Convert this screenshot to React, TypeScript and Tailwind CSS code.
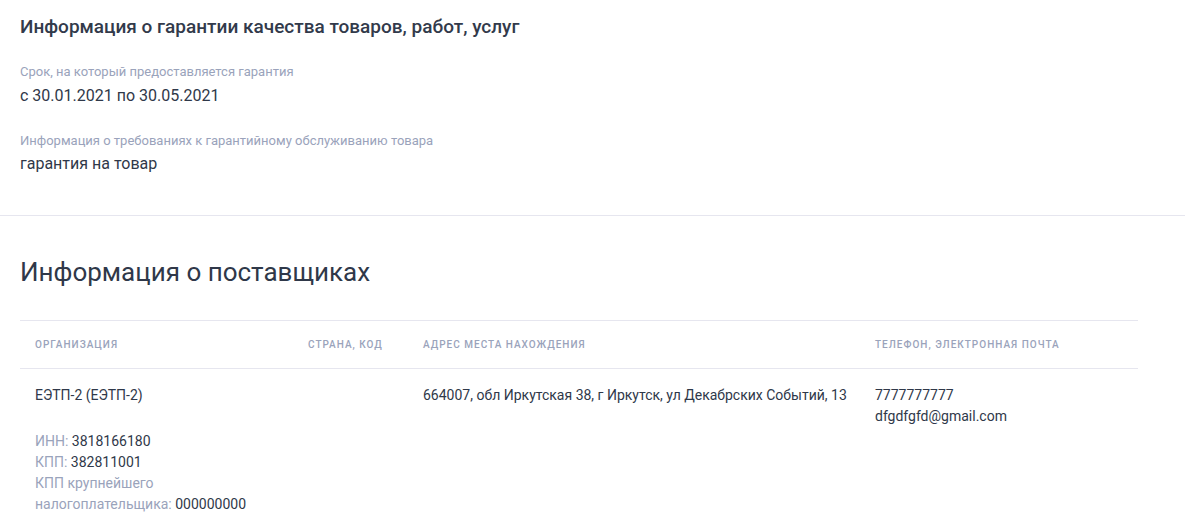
import React from 'react';

function App() {
  const suppliers = [
    {
      name: 'ЕЭТП-2 (ЕЭТП-2)',
      inn: '3818166180',
      kpp: '382811001',
      kppBig: '000000000',
      country: '',
      address: '664007, обл Иркутская 38, г Иркутск, ул Декабрских Событий, 13',
      phone: '7777777777',
      email: 'dfgdfgfd@gmail.com',
    },
  ];

  return (
    <div className="min-h-screen bg-white font-['Roboto',sans-serif] text-[#2f3849]">
      {/* гарантия */}
      <section className="px-5 pt-[15px] pb-10 border-b border-[#e6e6ef]">
        <h2 className="text-[19px] leading-6 font-medium text-[#323a4b]">
          Информация о гарантии качества товаров, работ, услуг
        </h2>
        <div className="mt-6">
          <div className="text-[13px] leading-[18px] text-[#9aa3bb]">Срок, на который предоставляется гарантия</div>
          <div className="mt-1 text-[16px] leading-[22px]">с 30.01.2021 по 30.05.2021</div>
        </div>
        <div className="mt-[25px]">
          <div className="text-[13px] leading-[18px] text-[#9aa3bb]">
            Информация о требованиях к гарантийному обслуживанию товара
          </div>
          <div className="mt-[3px] text-[16px] leading-[22px]">гарантия на товар</div>
        </div>
      </section>

      {/* поставщики */}
      <section className="px-5 pt-[38px]">
        <h2 className="text-[26px] leading-9 font-normal text-[#2f3849]">Информация о поставщиках</h2>
        <table className="mt-[30px] w-[1118px] border-collapse table-fixed">
          <colgroup>
            <col className="w-[273px]" />
            <col className="w-[115px]" />
            <col className="w-[452px]" />
            <col className="w-[278px]" />
          </colgroup>
          <thead>
            <tr className="border-t border-b border-[#e6e6ef]">
              {['Организация', 'Страна, код', 'Адрес места нахождения', 'Телефон, электронная почта'].map((h) => (
                <th
                  key={h}
                  className="h-[48px] px-[15px] text-left align-middle text-[10px] font-medium uppercase tracking-[1px] text-[#9aa3bb]"
                >
                  {h}
                </th>
              ))}
            </tr>
          </thead>
          <tbody>
            {suppliers.map((s) => (
              <tr key={s.name} className="align-top text-[14px] leading-[21px]">
                <td className="px-[15px] pt-4">
                  <div>{s.name}</div>
                  <div className="mt-[25px]">
                    <div>
                      <span className="text-[#9aa3bb]">ИНН: </span>
                      {s.inn}
                    </div>
                    <div>
                      <span className="text-[#9aa3bb]">КПП: </span>
                      {s.kpp}
                    </div>
                    <div>
                      <span className="text-[#9aa3bb]">КПП крупнейшего налогоплательщика: </span>
                      {s.kppBig}
                    </div>
                  </div>
                </td>
                <td className="px-[15px] pt-4">{s.country}</td>
                <td className="pl-[15px] pr-1 pt-4">{s.address}</td>
                <td className="px-[15px] pt-4">
                  <div>{s.phone}</div>
                  <div>{s.email}</div>
                </td>
              </tr>
            ))}
          </tbody>
        </table>
      </section>
    </div>
  );
}

export default App;
